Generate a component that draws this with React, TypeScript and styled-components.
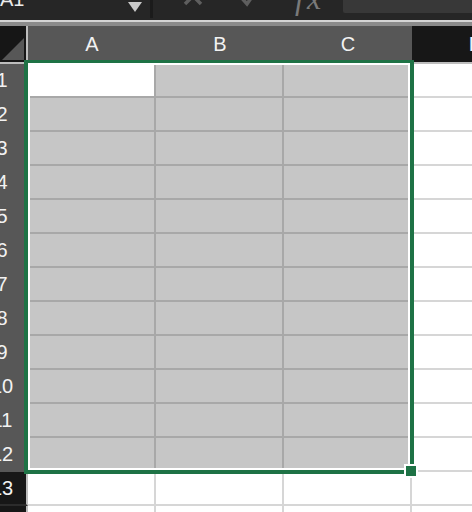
import React from "react";
import styled, { createGlobalStyle } from "styled-components";

const GREEN = "#1e7245";

const GlobalStyle = createGlobalStyle`
  html, body {
    margin: 0;
    padding: 0;
    background: #ffffff;
    overflow: hidden;
  }
  body {
    font-family: "Liberation Sans", Arial, sans-serif;
  }
`;

const Window = styled.div`
  width: 472px;
  height: 512px;
  overflow: hidden;
  display: flex;
  flex-direction: column;
  background: #ffffff;
`;

const FormulaBar = styled.div`
  flex: none;
  display: flex;
  height: 20px;
  background: #262626;
  border-bottom: 2px solid #d5d5d5;
  overflow: hidden;
`;

const NameBox = styled.div`
  box-sizing: border-box;
  width: 150px;
  padding-right: 8px;
  display: flex;
  justify-content: space-between;
  align-items: flex-start;
`;

const NameText = styled.span`
  font-size: 20px;
  line-height: 20px;
  margin-top: -11px;
  color: #ececec;
`;

const Caret = styled.svg`
  margin-top: 2px;
  flex: none;
`;

const Divider = styled.div`
  width: 3px;
  height: 18px;
  background: #1b1b1b;
`;

const Tools = styled.div`
  width: 190px;
  display: flex;
  align-items: flex-start;
`;

const ToolIcon = styled.svg<{ $left: number; $top: number }>`
  flex: none;
  margin-left: ${({ $left }) => $left}px;
  margin-top: ${({ $top }) => $top}px;
`;

const Fx = styled.span`
  font-family: "Liberation Serif", "Times New Roman", serif;
  font-style: italic;
  font-size: 32px;
  line-height: 32px;
  margin-top: -18px;
  margin-left: 36px;
  letter-spacing: 3px;
  color: #7a7a7a;
`;

const FormulaInput = styled.div`
  flex: 1;
  height: 13px;
  background: #383838;
  border-bottom-left-radius: 2px;
`;

const Sheet = styled.div`
  position: relative;
  flex: none;
  display: grid;
  grid-template-columns: 28px repeat(4, 128px);
  grid-template-rows: 38px;
  grid-auto-rows: 34px;
  border-top: 4px solid #8b8b8b;
`;

const Corner = styled.div`
  box-sizing: border-box;
  background: #161616;
  border-right: 2px solid #bdbdbd;
  border-bottom: 2px solid #bdbdbd;
  display: flex;
  align-items: flex-end;
  justify-content: flex-end;
  padding: 0 2px 2px 0;
`;

const ColHeader = styled.div<{ $selected: boolean }>`
  box-sizing: border-box;
  background: ${({ $selected }) => ($selected ? "#575757" : "#171717")};
  border-bottom: 2px solid #bdbdbd;
  color: #f2f2f2;
  font-size: 20px;
  display: flex;
  align-items: center;
  justify-content: center;
`;

const RowHeader = styled.div<{ $selected: boolean }>`
  box-sizing: border-box;
  background: ${({ $selected }) => ($selected ? "#575757" : "#171717")};
  border-right: 2px solid #bdbdbd;
  border-bottom: 2px solid ${({ $selected }) => ($selected ? "#575757" : "#2c2c2c")};
  color: #f2f2f2;
  font-size: 20px;
  display: flex;
  align-items: center;
  overflow: hidden;
`;

const RowLabel = styled.span`
  flex: none;
  width: 44px;
  margin-left: -20px;
  text-align: center;
`;

const Cell = styled.div<{ $selected: boolean; $active: boolean }>`
  box-sizing: border-box;
  background: ${({ $selected, $active }) =>
    $selected && !$active ? "#c6c6c6" : "#ffffff"};
  border-right: 2px solid ${({ $selected }) => ($selected ? "#a8a8a8" : "#d6d6d6")};
  border-bottom: 2px solid ${({ $selected }) => ($selected ? "#a8a8a8" : "#d6d6d6")};
`;

const Selection = styled.div`
  position: absolute;
  left: 24px;
  top: 34px;
  width: 390px;
  height: 414px;
  box-sizing: border-box;
  border: 4px solid ${GREEN};
  border-top-width: 3px;
  box-shadow: inset 0 0 0 2px #ffffff;
  pointer-events: none;
`;

const FillHandle = styled.div`
  position: absolute;
  right: -8px;
  bottom: -8px;
  width: 10px;
  height: 10px;
  background: ${GREEN};
  border: 2px solid #ffffff;
`;

const COLS = ["A", "B", "C", "D"];
const ROW_COUNT = 14;
const SELECTED_ROWS = 12;
const SELECTED_COLS = 3;

export default function App() {
  const rows = Array.from({ length: ROW_COUNT }, (_, i) => i + 1);

  return (
    <Window>
      <GlobalStyle />
      <FormulaBar>
        <NameBox>
          <NameText>A1</NameText>
          <Caret width="14" height="10" viewBox="0 0 14 10">
            <polygon points="0,0 14,0 7,10" fill="#c9c9c9" />
          </Caret>
        </NameBox>
        <Divider />
        <Tools>
          <ToolIcon $left={30} $top={-14} width="20" height="20" viewBox="0 0 20 20">
            <path d="M2 2 L18 18 M18 2 L2 18" stroke="#5e5e5e" strokeWidth="3.5" />
          </ToolIcon>
          <ToolIcon $left={34} $top={-15} width="22" height="22" viewBox="0 0 22 22">
            <path d="M3 11 L10 19 L21 3" stroke="#5e5e5e" strokeWidth="3.5" fill="none" />
          </ToolIcon>
          <Fx>fx</Fx>
        </Tools>
        <FormulaInput />
      </FormulaBar>

      <Sheet>
        <Corner>
          <svg width="22" height="22" viewBox="0 0 22 22">
            <polygon points="0,22 22,22 22,0" fill="#575757" />
          </svg>
        </Corner>
        {COLS.map((c, ci) => (
          <ColHeader key={c} $selected={ci < SELECTED_COLS}>
            {c}
          </ColHeader>
        ))}
        {rows.map(r => (
          <React.Fragment key={r}>
            <RowHeader $selected={r <= SELECTED_ROWS}>
              <RowLabel>{r}</RowLabel>
            </RowHeader>
            {COLS.map((c, ci) => (
              <Cell
                key={c + r}
                $selected={r <= SELECTED_ROWS && ci < SELECTED_COLS}
                $active={r === 1 && ci === 0}
              />
            ))}
          </React.Fragment>
        ))}
        <Selection>
          <FillHandle />
        </Selection>
      </Sheet>
    </Window>
  );
}
